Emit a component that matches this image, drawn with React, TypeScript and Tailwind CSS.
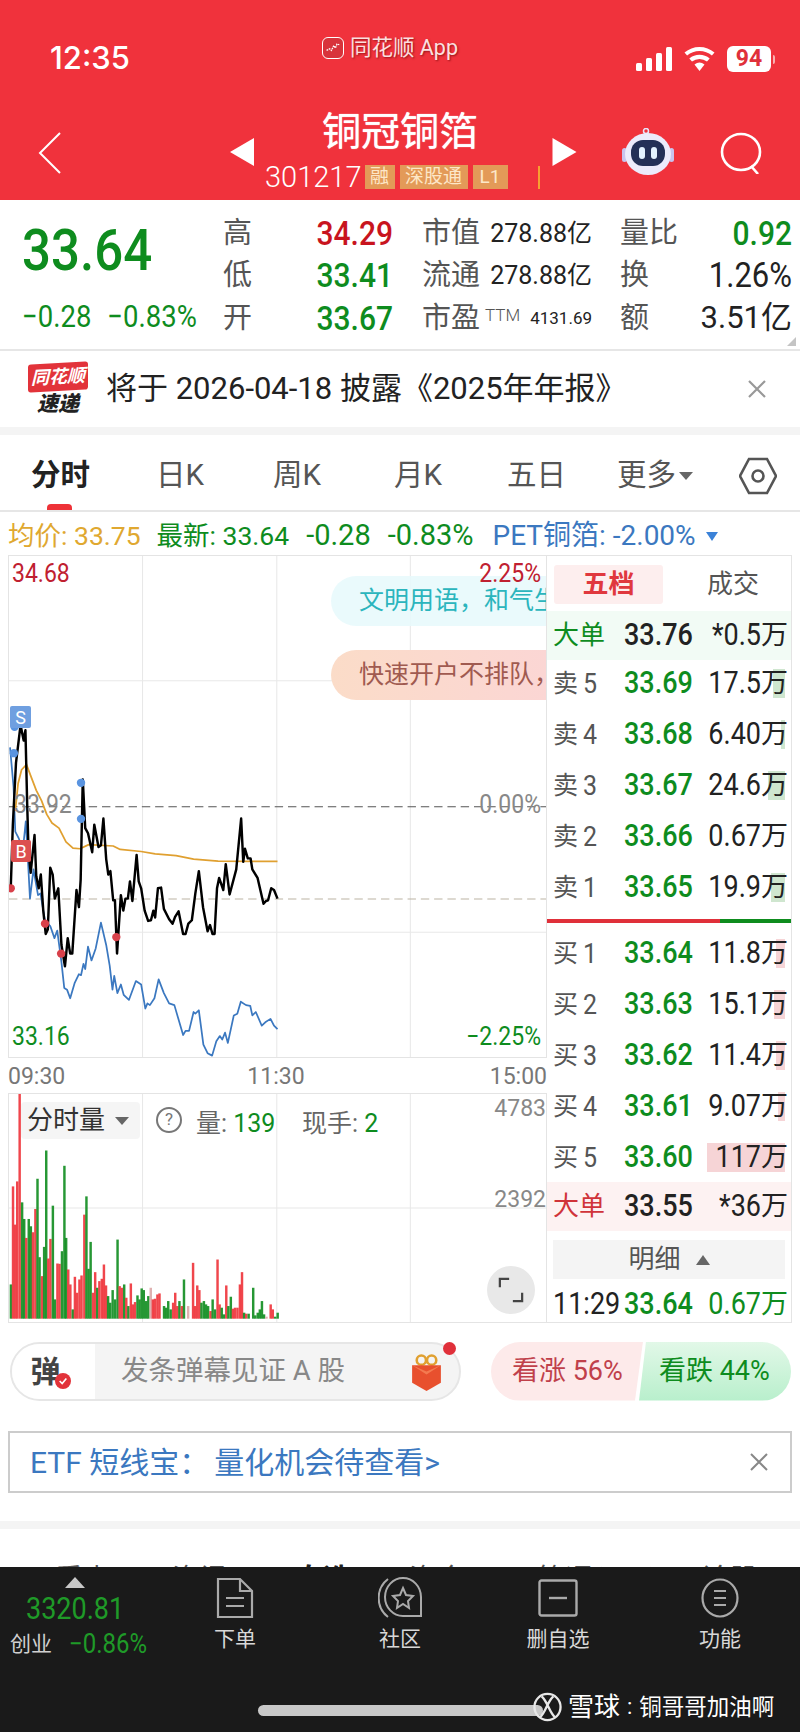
import type { ReactNode } from "react";

const GREEN = "text-[#0e8c1e]";
const num = "inline-block scale-y-[1.13]";

const blackLine =
  "27,985 33,800 42,620 55,510 64,555 69,525 74,740 78,880 84,940 95,830 100,950 107,985 113,945 120,1050 127,1118 133,1105 140,925 147,945 153,1015 163,985 172,1150 182,1212 190,1130 197,1175 203,1175 215,990 222,1040 227,960 233,668 240,810 248,825 260,880 266,800 278,865 285,860 292,782 300,900 306,945 312,935 320,1020 325,1020 331,1175 342,1005 349,1050 355,1015 362,1015 368,965 375,1022 387,888 393,965 400,985 410,1050 420,1080 428,1078 435,1050 440,1070 448,985 457,983 465,1045 480,1075 490,1088 497,1068 507,1052 520,1118 527,1118 535,1088 545,1078 555,1000 565,935 577,1040 590,1110 597,1092 604,1118 610,1118 617,985 623,955 635,990 642,915 653,1003 672,930 686,782 692,908 697,870 705,898 713,898 718,930 733,955 750,1030 757,1022 763,1020 772,985 780,990 790,1015";
const blueLine =
  "25,575 35,690 40,820 50,840 62,870 70,790 76,900 82,1015 92,930 105,1005 112,1000 125,1080 140,1095 152,1130 160,1108 172,1200 180,1275 188,1280 197,1305 210,1260 222,1235 228,1238 235,1205 240,1220 248,1155 258,1195 270,1160 285,1085 300,1150 310,1210 318,1280 323,1240 332,1290 342,1265 350,1295 365,1310 385,1255 400,1265 412,1335 418,1320 425,1325 438,1305 450,1250 465,1290 480,1320 495,1325 520,1412 527,1400 537,1400 550,1345 555,1350 565,1340 578,1440 590,1465 603,1472 615,1430 625,1415 632,1425 640,1405 648,1435 665,1355 675,1350 685,1315 700,1325 712,1327 718,1355 728,1345 745,1385 755,1375 770,1365 780,1385 790,1395";
const avgLine =
  "40,760 48,680 58,640 72,625 85,660 100,700 115,730 130,770 145,795 165,810 185,850 205,868 225,870 250,858 320,862 340,872 400,878 440,885 500,890 550,900 620,906 790,907";

// x, colour, top of the bar, in the same units as the chart's viewBox
const volumeBars: [number, string, number][] = [
  [27, "g", 615], [33, "r", 320], [39, "r", 435], [45, "r", 305], [52, "r", 42], [59, "g", 368], [65, "g", 418], [71, "r", 475],
  [78, "g", 418], [84, "g", 440], [90, "r", 458], [97, "r", 388], [103, "g", 297], [109, "g", 533], [116, "r", 590], [122, "g", 502],
  [128, "g", 212], [134, "r", 537], [140, "r", 478], [147, "g", 378], [153, "g", 660], [160, "r", 552], [166, "r", 553], [173, "g", 515],
  [180, "g", 258], [185, "g", 475], [191, "r", 570], [197, "r", 615], [204, "g", 690], [210, "r", 592], [216, "r", 640], [223, "r", 600],
  [229, "r", 588], [237, "r", 405], [243, "g", 350], [249, "g", 568], [255, "g", 487], [262, "r", 640], [268, "r", 578], [274, "g", 625],
  [280, "r", 605], [287, "r", 598], [293, "r", 555], [299, "r", 618], [305, "g", 650], [311, "g", 670], [318, "g", 632], [325, "g", 660],
  [332, "g", 480], [338, "r", 620], [344, "r", 625], [351, "g", 615], [357, "r", 655], [363, "g", 680], [370, "r", 612], [376, "r", 675],
  [382, "r", 668], [389, "g", 648], [395, "g", 660], [401, "g", 627], [407, "g", 632], [414, "g", 665], [420, "g", 650], [427, "p", 625],
  [433, "r", 660], [439, "r", 658], [446, "r", 645], [452, "r", 642], [465, "g", 680], [471, "g", 685], [477, "g", 665], [484, "g", 690],
  [491, "r", 670], [497, "r", 640], [503, "r", 680], [509, "g", 665], [516, "r", 680], [522, "g", 600], [534, "p", 680], [548, "r", 550],
  [554, "r", 680], [560, "r", 618], [566, "r", 632], [572, "g", 670], [579, "g", 665], [585, "g", 675], [591, "g", 680], [598, "r", 695],
  [604, "g", 660], [611, "g", 690], [618, "r", 540], [624, "r", 675], [630, "g", 685], [636, "g", 705], [643, "r", 618], [649, "g", 680],
  [656, "g", 652], [662, "r", 688], [668, "r", 685], [675, "r", 685], [682, "r", 615], [688, "r", 578], [694, "g", 700], [700, "r", 703],
  [707, "g", 703], [720, "g", 625], [726, "g", 708], [733, "g", 700], [739, "g", 690], [745, "g", 665], [751, "g", 705], [758, "p", 712],
  [770, "r", 675], [776, "r", 690], [783, "g", 712], [790, "g", 700],
];

const barColor: Record<string, string> = { g: "#0e8c1e", r: "#ee3238", p: "#dca8a8" };

const sells = [
  { label: "卖", n: "5", price: "33.69", vol: "17.5万", bar: 12 },
  { label: "卖", n: "4", price: "33.68", vol: "6.40万", bar: 4 },
  { label: "卖", n: "3", price: "33.67", vol: "24.6万", bar: 17 },
  { label: "卖", n: "2", price: "33.66", vol: "0.67万", bar: 0 },
  { label: "卖", n: "1", price: "33.65", vol: "19.9万", bar: 14 },
];
const buys = [
  { label: "买", n: "1", price: "33.64", vol: "11.8万", bar: 9 },
  { label: "买", n: "2", price: "33.63", vol: "15.1万", bar: 11 },
  { label: "买", n: "3", price: "33.62", vol: "11.4万", bar: 9 },
  { label: "买", n: "4", price: "33.61", vol: "9.07万", bar: 7 },
  { label: "买", n: "5", price: "33.60", vol: "117万", bar: 78 },
];

function DepthRow({ label, n, price, vol, bar, tint }: { label: string; n: string; price: string; vol: string; bar: number; tint: string }) {
  return (
    <div className="relative flex h-[51px] items-center pl-[6px] pr-[3px]">
      <span className="flex w-[71px] items-center gap-[5px] text-[25px] text-[#555]">
        {label}
        <span className={`${num} text-[25px]`}>{n}</span>
      </span>
      <span className={`${num} text-[27px] font-medium ${GREEN}`}>{price}</span>
      <span className="relative ml-auto text-[27px] text-[#222]">
        <span className={`absolute top-[6px] right-[3px] h-[29px] ${tint}`} style={{ width: bar }} />
        <span className="relative flex items-baseline">
          <span className={num}>{vol.slice(0, -1)}</span>
          <span>万</span>
        </span>
      </span>
    </div>
  );
}

function BigOrder({ color, bg, price, vol, className }: { color: string; bg: string; price: string; vol: string; className?: string }) {
  return (
    <div className={`flex h-[49px] items-center pl-[6px] pr-[3px] ${bg} ${className ?? ""}`}>
      <span className={`w-[71px] text-[26px] ${color}`}>大单</span>
      <span className={`${num} text-[27px] font-medium text-[#222]`}>{price}</span>
      <span className="ml-auto flex items-baseline text-[27px] text-[#222]">
        <span className={num}>{vol}</span>
        <span>万</span>
      </span>
    </div>
  );
}

function Stat({ label, children, small }: { label: string; children: ReactNode; small?: ReactNode }) {
  return (
    <div className="flex h-[42.5px] items-center justify-between">
      <span className="flex items-center whitespace-nowrap text-[29px] text-[#555]">
        {label}
        {small}
      </span>
      {children}
    </div>
  );
}

function NavItem({ width, label, children }: { width: string; label: string; children: ReactNode }) {
  return (
    <div className={`flex shrink-0 flex-col items-center ${width}`}>
      <div className="flex h-[42px] items-center">{children}</div>
      <span className="mt-[7px] text-[21px] leading-[26px] text-[#d8d8d8]">{label}</span>
    </div>
  );
}

function Triangle({ className }: { className: string }) {
  return <span className={`inline-block h-0 w-0 border-x-[7px] border-t-[8px] border-x-transparent ${className}`} />;
}

export default function App() {
  return (
    <div className="relative h-[1732px] w-[800px] overflow-hidden bg-white font-['Roboto','Noto_Sans_CJK_SC',sans-serif]">
      {/* header */}
      <header className="h-[200px] bg-[#f0323c] text-white">
        <div className="flex h-[108px] items-start">
          <span className="ml-[50px] mt-[39px] w-[272px] font-['Inter',sans-serif] text-[31px] leading-[38px] font-medium">12:35</span>
          <div className="mt-[35px] flex w-[314px] items-center gap-[6px]">
            <div className="flex h-[22px] w-[22px] items-center justify-center rounded-[6px] border border-white bg-[#d8333b]">
              <svg viewBox="0 0 20 20" className="h-[16px] w-[16px]">
                <path d="M2 13 L6 11 L8 13 L11 7 L13 10 L15 5 L18 6" fill="none" stroke="#fff" strokeWidth="1.6" strokeDasharray="2 1" />
              </svg>
            </div>
            <span className="text-[21.5px] leading-[26px] text-[#fbe0e0] [text-shadow:1px_1px_2px_rgba(90,0,0,0.6)]">同花顺 App</span>
          </div>
          <div className="mt-[46px] flex items-center">
            <svg viewBox="0 0 36 24" className="h-[24px] w-[36px]" fill="#fff">
              <rect x="0" y="16" width="6" height="8" rx="1.5" />
              <rect x="10" y="11" width="6" height="13" rx="1.5" />
              <rect x="20" y="6" width="6" height="18" rx="1.5" />
              <rect x="30" y="0" width="6" height="24" rx="1.5" />
            </svg>
            <svg viewBox="0 0 30 24" className="ml-[12px] h-[24px] w-[31px]" fill="#fff">
              <path d="M15 24 L10 17.5 A8 8 0 0 1 20 17.5 Z" />
              <path d="M7.5 14.6 A12 12 0 0 1 22.5 14.6 L25.2 11.4 A16.5 16.5 0 0 0 4.8 11.4 Z" />
              <path d="M2.6 8.6 A19 19 0 0 1 27.4 8.6 L30 5.6 A23 23 0 0 0 0 5.6 Z" />
            </svg>
            <div className="ml-[12px] flex h-[26px] w-[44px] items-center justify-center rounded-[6px] bg-white text-[23px] font-bold text-[#e0303a]">94</div>
            <span className="ml-[2px] h-[9px] w-[2px] rounded-r bg-[#f8b0b0]" />
          </div>
        </div>
        <div className="flex h-[92px] items-start">
          <svg viewBox="0 0 24 42" className="ml-[38px] mt-[24px] h-[42px] w-[24px] shrink-0" fill="none" stroke="#fff" strokeWidth="2">
            <path d="M22 1 L2 21 L22 41" />
          </svg>
          <svg viewBox="0 0 24 28" className="ml-[168px] mt-[30px] h-[28px] w-[24px] shrink-0" fill="#fff">
            <path d="M0 14 L24 0 V28 Z" />
          </svg>
          <div className="flex w-[298px] shrink-0 flex-col">
            <span className="pr-[6px] text-center text-[39px] leading-[48px] text-[#fff] [text-shadow:0_0_1px_#fff]">铜冠铜箔</span>
            <div className="mt-[6px] flex items-center pl-[11px]">
              <span className="text-[29px] leading-[30px] font-light">301217</span>
              <span className="ml-[3px] flex h-[24px] w-[30px] items-center justify-center bg-[#e39a58] text-[19px] text-[#fde7c8]">融</span>
              <span className="ml-[5px] flex h-[24px] w-[68px] items-center justify-center bg-[#e39a58] text-[19px] text-[#fde7c8]">深股通</span>
              <span className="ml-[5px] flex h-[24px] w-[35px] items-center justify-center bg-[#e39a58] text-[19px] text-[#fde7c8]">L1</span>
              <span className="ml-[30px] h-[23px] w-[2px] bg-[#f7a030]" />
            </div>
          </div>
          <svg viewBox="0 0 24 28" className="mt-[30px] h-[28px] w-[25px] shrink-0" fill="#fff">
            <path d="M24 14 L0 0 V28 Z" />
          </svg>
          <svg viewBox="0 0 52 48" className="ml-[45px] mt-[20px] h-[48px] w-[52px] shrink-0">
            <circle cx="24" cy="3" r="2.5" fill="none" stroke="#e8e4fa" strokeWidth="1.5" />
            <rect x="0" y="20" width="5" height="14" rx="2.5" fill="#c9c3ee" />
            <rect x="47" y="20" width="5" height="14" rx="2.5" fill="#c9c3ee" />
            <ellipse cx="26" cy="26" rx="23" ry="21" fill="#ecebfb" />
            <rect x="9" y="12" width="34" height="26" rx="12" fill="#243057" />
            <rect x="17" y="19" width="6" height="12" rx="3" fill="#e4f2ff" />
            <rect x="29" y="19" width="6" height="12" rx="3" fill="#e4f2ff" />
          </svg>
          <svg viewBox="0 0 44 42" className="ml-[46px] mt-[24px] h-[42px] w-[44px] shrink-0" fill="none" stroke="#fff" strokeWidth="2.6">
            <ellipse cx="21" cy="20" rx="19" ry="18" />
            <path d="M31 34 L38 42" />
          </svg>
        </div>
      </header>

      {/* quote */}
      <section className="relative flex h-[151px] border-b-2 border-[#e6e6e6] pt-[12px]">
        <div className="flex h-[126px] w-[223px] flex-col justify-between pl-[22px]">
          <span className={`${num} origin-top text-[51px] leading-[62px] font-medium ${GREEN} mt-[4px]`}>33.64</span>
          <div className={`mb-[3px] flex gap-[16px] text-[27.5px] leading-[36px] ${GREEN}`}>
            <span className={num}>−0.28</span>
            <span className={num}>−0.83%</span>
          </div>
        </div>
        <div className="w-[170px]">
          <Stat label="高"><span className={`${num} text-[30px] font-medium text-[#c8141e]`}>34.29</span></Stat>
          <Stat label="低"><span className={`${num} text-[30px] font-medium ${GREEN}`}>33.41</span></Stat>
          <Stat label="开"><span className={`${num} text-[30px] font-medium ${GREEN}`}>33.67</span></Stat>
        </div>
        <div className="ml-[29px] w-[170px]">
          <Stat label="市值"><span className="text-[25px] text-[#222]">278.88亿</span></Stat>
          <Stat label="流通"><span className="text-[25px] text-[#222]">278.88亿</span></Stat>
          <Stat label="市盈" small={<span className="ml-[5px] -translate-y-[3px] text-[17px] font-light text-[#555]">TTM</span>}>
            <span className="text-[17px] text-[#222]">4131.69</span>
          </Stat>
        </div>
        <div className="ml-[28px] w-[172px]">
          <Stat label="量比"><span className={`${num} text-[30px] font-medium ${GREEN}`}>0.92</span></Stat>
          <Stat label="换"><span className={`${num} text-[31px] text-[#222]`}>1.26%</span></Stat>
          <Stat label="额"><span className="text-[31px] text-[#222]">3.51亿</span></Stat>
        </div>
        <span className="absolute right-[4px] bottom-[3px] h-0 w-0 border-b-[9px] border-l-[9px] border-b-[#c4c4c4] border-l-transparent" />
      </section>

      {/* notice */}
      <section className="flex h-[76px] items-center">
        <div className="ml-[27px] flex w-[62px] flex-col items-center">
          <span className="flex h-[28px] w-[60px] -skew-y-3 items-center justify-center rounded-[3px] bg-[#e2333a] text-[18px] leading-none font-bold text-white italic">同花顺</span>
          <span className="mt-[2px] text-[21px] leading-[22px] font-black text-[#222] italic">速递</span>
        </div>
        <span className="ml-[17px] whitespace-nowrap text-[31px] text-[#222]">将于 2026-04-18 披露《2025年年报》</span>
        <svg viewBox="0 0 18 18" className="ml-auto mr-[34px] h-[18px] w-[18px]" fill="none" stroke="#999" strokeWidth="2.2">
          <path d="M1 1 L17 17 M17 1 L1 17" />
        </svg>
      </section>
      <div className="h-[8px] bg-[#f4f4f4]" />

      {/* period tabs */}
      <nav className="relative flex h-[77px] items-center border-b-2 border-[#e6e6e6] pt-[6px] text-[29.5px] text-[#555]">
        <span className="ml-[31px] w-[125px] font-bold text-[#222]">分时</span>
        <span className="w-[117px]">日K</span>
        <span className="w-[121px]">周K</span>
        <span className="w-[113px]">月K</span>
        <span className="w-[110px]">五日</span>
        <span className="flex w-[122px] items-center gap-[3px]">
          更多
          <Triangle className="border-t-[#666]" />
        </span>
        <svg viewBox="0 0 38 38" className="h-[38px] w-[38px]" fill="none" stroke="#555" strokeWidth="2.6">
          <path d="M10 2 H28 L37 19 L28 36 H10 L1 19 Z" />
          <circle cx="19" cy="19" r="5.5" />
        </svg>
        <span className="absolute bottom-0 left-[47px] h-[6px] w-[25px] rounded-t-[4px] bg-[#ee3238]" />
      </nav>

      {/* legend */}
      <div className="flex h-[43px] items-center pl-[8px] pt-[5px] text-[26.5px] whitespace-nowrap">
        <span className="text-[#e0a830]">均价: 33.75</span>
        <span className={`ml-[16px] ${GREEN}`}>最新: 33.64</span>
        <span className={`ml-[17px] text-[29px] ${GREEN}`}>-0.28</span>
        <span className={`ml-[17px] text-[29px] ${GREEN}`}>-0.83%</span>
        <span className="ml-[19px] text-[28px] text-[#3b78c0]">PET铜箔: -2.00%</span>
        <span className="ml-[10px] inline-block h-0 w-0 border-x-[6px] border-t-[9px] border-x-transparent border-t-[#3b82d8]" />
      </div>

      {/* chart + depth */}
      <div className="flex pl-[8px]">
        <div className="w-[539px] shrink-0">
          <div className="relative h-[503px] overflow-hidden border border-[#e4e4e4]">
            <svg viewBox="22 18 1536 1458" preserveAspectRatio="none" className="absolute inset-0 h-full w-full">
              {[404, 788, 1170].map((x) => (
                <line key={x} x1={x} x2={x} y1="18" y2="1476" stroke="#e8e8e8" strokeWidth="3" />
              ))}
              <line x1="22" x2="1558" y1="381" y2="381" stroke="#e8e8e8" strokeWidth="3" />
              <line x1="22" x2="1558" y1="1113" y2="1113" stroke="#e8e8e8" strokeWidth="3" />
              <line x1="22" x2="1558" y1="748" y2="748" stroke="#555" strokeWidth="3" strokeDasharray="24 14" />
              <line x1="22" x2="1558" y1="1016" y2="1016" stroke="#bcb4a4" strokeWidth="3" strokeDasharray="24 14" />
              <polyline points={blueLine} fill="none" stroke="#3b78c0" strokeWidth="5" strokeLinejoin="round" />
              <polyline points={avgLine} fill="none" stroke="#e0a030" strokeWidth="5" strokeLinejoin="round" />
              <polyline points={blackLine} fill="none" stroke="#000" strokeWidth="7" strokeLinejoin="round" />
              {[[38, 515], [36, 592], [228, 678], [228, 783]].map(([cx, cy]) => (
                <circle key={`${cx}-${cy}`} cx={cx} cy={cy} r="12" fill="#5a94e0" />
              ))}
              {[[27, 985], [125, 1088], [171, 1175], [329, 1127]].map(([cx, cy]) => (
                <circle key={`${cx}-${cy}`} cx={cx} cy={cy} r="12" fill="#d8404a" />
              ))}
            </svg>
            <span className={`${num} absolute top-[1px] left-[3px] text-[23px] text-[#c02030]`}>34.68</span>
            <span className={`${num} absolute top-[1px] right-[5px] z-10 text-[23px] text-[#c02030]`}>2.25%</span>
            <span className={`${num} absolute top-[232px] left-[5px] text-[23px] text-[#888]`}>33.92</span>
            <span className={`${num} absolute top-[232px] right-[5px] text-[23px] text-[#888]`}>0.00%</span>
            <span className={`${num} absolute top-[464px] left-[3px] text-[23px] ${GREEN}`}>33.16</span>
            <span className={`${num} absolute top-[464px] right-[5px] text-[23px] ${GREEN}`}>−2.25%</span>
            <div className="absolute top-[20px] right-0 flex h-[50px] w-[215px] items-center overflow-hidden rounded-l-full bg-[#e8f9fc]/90 pl-[28px] text-[25px] whitespace-nowrap text-[#2bb5bd]">文明用语，和气生财</div>
            <div className="absolute top-[94px] right-0 flex h-[50px] w-[215px] items-center overflow-hidden rounded-l-full bg-gradient-to-r from-[#fbdcc8] to-[#fbd6d4] pl-[28px] text-[25px] whitespace-nowrap text-[#a05a50]">快速开户不排队，</div>
            <span className="absolute top-[150px] left-[1px] flex h-[22px] w-[21px] items-center justify-center rounded-[2px] bg-[#6f9fe0] text-[18px] text-white">S</span>
            <span className="absolute top-[284px] left-[2px] flex h-[22px] w-[20px] items-center justify-center rounded-[2px] bg-[#dc5050] text-[18px] text-white">B</span>
          </div>
          <div className="flex h-[35px] items-center justify-between pt-[4px] text-[23px] text-[#777]">
            <span>09:30</span>
            <span className="-ml-[3px]">11:30</span>
            <span>15:00</span>
          </div>
          <div className="relative h-[230px] overflow-hidden border border-[#e4e4e4]">
            <svg viewBox="22 42 1536 686" preserveAspectRatio="none" className="absolute inset-0 h-full w-full">
              {[404, 788, 1170].map((x) => (
                <line key={x} x1={x} x2={x} y1="42" y2="728" stroke="#e8e8e8" strokeWidth="3" />
              ))}
              <line x1="22" x2="1558" y1="385" y2="385" stroke="#e8e8e8" strokeWidth="3" />
              {volumeBars.map(([x, c, top]) => (
                <rect key={x} x={x - 3} y={top} width="7" height={718 - top} fill={barColor[c]} fillOpacity="0.9" />
              ))}
            </svg>
            <div className="absolute top-[8px] left-[12px] flex h-[37px] w-[119px] items-center justify-center gap-[10px] rounded-[4px] bg-[#f4f4f4]/95 pr-[5px] text-[26px] text-[#333]">
              分时量
              <Triangle className="border-t-[#666]" />
            </div>
            <div className="absolute top-[13px] left-[147px] flex h-[26px] w-[26px] items-center justify-center rounded-full border-2 border-[#777] text-[17px] text-[#777]">?</div>
            <span className="absolute top-[11px] left-[187px] text-[25px] whitespace-nowrap text-[#666]">
              量: <span className={GREEN}>139</span>
            </span>
            <span className="absolute top-[11px] left-[293px] text-[25px] whitespace-nowrap text-[#666]">
              现手: <span className={GREEN}>2</span>
            </span>
            <span className="absolute top-[-2px] right-0 text-[23px] text-[#888]">4783</span>
            <span className="absolute top-[89px] right-0 text-[23px] text-[#888]">2392</span>
            <div className="absolute top-[172px] right-[11px] flex h-[48px] w-[48px] items-center justify-center rounded-full bg-[#e8e8e8]">
              <svg viewBox="0 0 28 28" className="h-[26px] w-[26px]" fill="none" stroke="#444" strokeWidth="2.4">
                <path d="M2 11 V2 H12 M26 17 V26 H16" />
              </svg>
            </div>
          </div>
        </div>

        {/* order book */}
        <aside className="h-[768px] w-[245px] shrink-0 border-y border-r border-[#e4e4e4]">
          <div className="flex h-[55px] items-center pt-[1px]">
            <span className="ml-[7px] flex h-[39px] w-[109px] items-center justify-center rounded-[3px] bg-[#fdeeee] text-[26px] font-bold text-[#e0383e]">五档</span>
            <span className="ml-[16px] w-[108px] text-center text-[26px] text-[#555]">成交</span>
          </div>
          <BigOrder color="text-[#0e8c1e]" bg="bg-[#f2fbf5]" price="33.76" vol="*0.5" />
          <div className="-mt-[2px]">
            {sells.map((r) => (
              <DepthRow key={r.n} {...r} tint="bg-[#cfe6cf]" />
            ))}
          </div>
          <div className="mt-[6px] mb-[5px] flex h-[4px]">
            <span className="w-[173px] bg-[#e0303a]" />
            <span className="flex-1 bg-[#0e8c1e]" />
          </div>
          {buys.map((r) => (
            <DepthRow key={r.n} {...r} tint="bg-[#f6d4d6]" />
          ))}
          <BigOrder color="text-[#d0343a]" bg="bg-[#fdf2f2]" price="33.55" vol="*36" className="-mt-[1px]" />
          <div className="mx-[6px] mt-[9px] flex h-[39px] items-center justify-center gap-[15px] bg-[#f4f4f4] text-[26px] text-[#555]">
            明细
            <span className="h-0 w-0 border-x-[7px] border-b-[10px] border-x-transparent border-b-[#666]" />
          </div>
          <div className="flex h-[50px] items-center pl-[6px] pr-[3px] text-[27px]">
            <span className={`${num} w-[71px] text-[#222]`}>11:29</span>
            <span className={`${num} font-medium ${GREEN}`}>33.64</span>
            <span className={`ml-auto flex items-baseline ${GREEN}`}>
              <span className={num}>0.67</span>万
            </span>
          </div>
        </aside>
      </div>

      {/* danmu + vote */}
      <div className="mt-[18px] flex h-[60px] items-center pl-[10px]">
        <div className="relative flex h-[59px] w-[451px] overflow-visible rounded-full border-2 border-[#e6e6e6] bg-[#f4f4f4]">
          <div className="relative flex w-[83px] items-center justify-center rounded-l-full bg-white pr-[16px] text-[30px] font-bold text-[#444]">
            弹
            <span className="absolute right-[24px] bottom-[10px] flex h-[16px] w-[16px] items-center justify-center rounded-full bg-[#e2333a]">
              <svg viewBox="0 0 12 12" className="h-[10px] w-[10px]" fill="none" stroke="#fff" strokeWidth="2">
                <path d="M2 6 L5 9 L10 3" />
              </svg>
            </span>
          </div>
          <span className="ml-[26px] self-center text-[27.5px] text-[#888]">发条弹幕见证 A 股</span>
          <svg viewBox="0 0 34 36" className="absolute top-[10px] right-[15px] h-[37px] w-[35px]">
            <circle cx="12" cy="6" r="4.5" fill="none" stroke="#e0a030" strokeWidth="2.5" />
            <circle cx="22" cy="6" r="4.5" fill="none" stroke="#e0a030" strokeWidth="2.5" />
            <path d="M3 11 H31 V28 L17 36 L3 28 Z" fill="#e8502e" />
            <path d="M3 11 L17 20 L31 11 L17 17 Z" fill="#f47a50" />
          </svg>
          <span className="absolute top-[-2px] right-[3px] h-[13px] w-[13px] rounded-full bg-[#e0303a]" />
        </div>
        <div className="ml-[30px] flex h-[59px] w-[300px]">
          <div className="flex w-[152px] items-center rounded-l-full bg-[#fdeaea] pl-[21px] text-[27px] whitespace-nowrap text-[#c0404a] [clip-path:polygon(0_0,100%_0,calc(100%-8px)_100%,0_100%)]">
            看涨 56%
          </div>
          <div className="ml-[-4px] flex w-[152px] items-center rounded-r-full bg-gradient-to-b from-[#e2f8e8] to-[#b8efcc] pl-[20px] text-[27px] whitespace-nowrap text-[#0e8c1e] [clip-path:polygon(7px_0,100%_0,100%_100%,0_100%)]">
            看跌 44%
          </div>
        </div>
      </div>

      {/* promo */}
      <div className="mx-[8px] mt-[30px] flex h-[62px] items-center border-2 border-[#cccccc] pl-[20px] text-[30px] text-[#3b78c0]">
        ETF 短线宝：<span className="ml-[5px]">量化机会待查看&gt;</span>
        <svg viewBox="0 0 18 18" className="ml-auto mr-[22px] h-[18px] w-[18px]" fill="none" stroke="#888" strokeWidth="2">
          <path d="M1 1 L17 17 M17 1 L1 17" />
        </svg>
      </div>

      <div className="mt-[28px] h-[8px] bg-[#f4f4f4]" />
      <div className="flex h-[38px] overflow-hidden pt-[33px] text-[28px] leading-[36px] text-[#555]">
        <span className="ml-[55px] w-[117px]">看点</span>
        <span className="w-[123px]">资讯</span>
        <span className="w-[114px] font-bold text-[#222]">自选</span>
        <span className="w-[128px]">资金</span>
        <span className="w-[165px]">简况(F10)</span>
        <span>论股</span>
      </div>

      {/* bottom bar */}
      <footer className="relative h-[166px] bg-[#1a1a1a]">
        <div className="flex pt-[10px]">
          <div className="relative w-[155px] shrink-0">
            <span className="mx-auto ml-[65px] block h-0 w-0 border-x-[10px] border-b-[11px] border-x-transparent border-b-[#c8c8c8]" />
            <span className={`${num} ml-[26px] mt-[3px] text-[27px] leading-[36px] text-[#1f9a28]`}>3320.81</span>
            <div className="mt-[3px] flex items-center pl-[10px]">
              <span className="text-[21px] leading-[28px] text-[#d0d0d0]">创业</span>
              <span className={`${num} ml-[17px] text-[24px] leading-[28px] text-[#1f9a28]`}>−0.86%</span>
            </div>
          </div>
          <NavItem width="w-[160px]" label="下单">
            <svg viewBox="0 0 38 42" className="h-[42px] w-[38px]" fill="none" stroke="#aaa" strokeWidth="2.2">
              <path d="M2 2 H24 L36 14 V40 H2 Z M24 2 V14 H36" />
              <path d="M10 21 H28 M10 29 H28" />
            </svg>
          </NavItem>
          <NavItem width="w-[170px]" label="社区">
            <svg viewBox="0 0 44 42" className="h-[42px] w-[44px]" fill="none" stroke="#aaa" strokeWidth="2">
              <path d="M43 20 V39 H25 A18 19 0 1 1 43 20 Z" />
              <path d="M10 2 A24 24 0 0 0 10 40" />
              <path d="M25 11 L28 18 L35 19 L30 24 L31 31 L25 27 L19 31 L20 24 L15 19 L22 18 Z" />
            </svg>
          </NavItem>
          <NavItem width="w-[146px]" label="删自选">
            <svg viewBox="0 0 40 38" className="h-[38px] w-[40px]" fill="none" stroke="#aaa" strokeWidth="2.4">
              <rect x="1.5" y="1.5" width="37" height="35" rx="2" />
              <path d="M11 19 H29" />
            </svg>
          </NavItem>
          <NavItem width="w-[178px]" label="功能">
            <svg viewBox="0 0 38 40" className="h-[40px] w-[38px]" fill="none" stroke="#aaa" strokeWidth="2.2">
              <ellipse cx="19" cy="20" rx="17.5" ry="18.5" />
              <path d="M13 13 H25 M13 20 H25 M13 27 H25" />
            </svg>
          </NavItem>
        </div>
        <div className="absolute top-[138px] left-[258px] h-[11px] w-[285px] rounded-full bg-[#c8c8c8]" />
        <div className="absolute top-[122px] left-[533px] flex items-center gap-[6px]">
          <svg viewBox="0 0 30 30" className="h-[30px] w-[29px]" fill="none" stroke="#e8e8e8" strokeWidth="2.4">
            <circle cx="15" cy="15" r="13.5" />
            <path d="M9 4 C16 11 16 19 23 26 M21 4 C14 11 14 19 7 26" />
          </svg>
          <span className="flex items-center whitespace-nowrap text-white">
            <span className="text-[26px] leading-[36px]">雪球</span>
            <span className="mx-[7px] text-[22px] leading-[36px]">:</span>
            <span className="text-[22.5px] leading-[36px]">铜哥哥加油啊</span>
          </span>
        </div>
      </footer>
    </div>
  );
}
